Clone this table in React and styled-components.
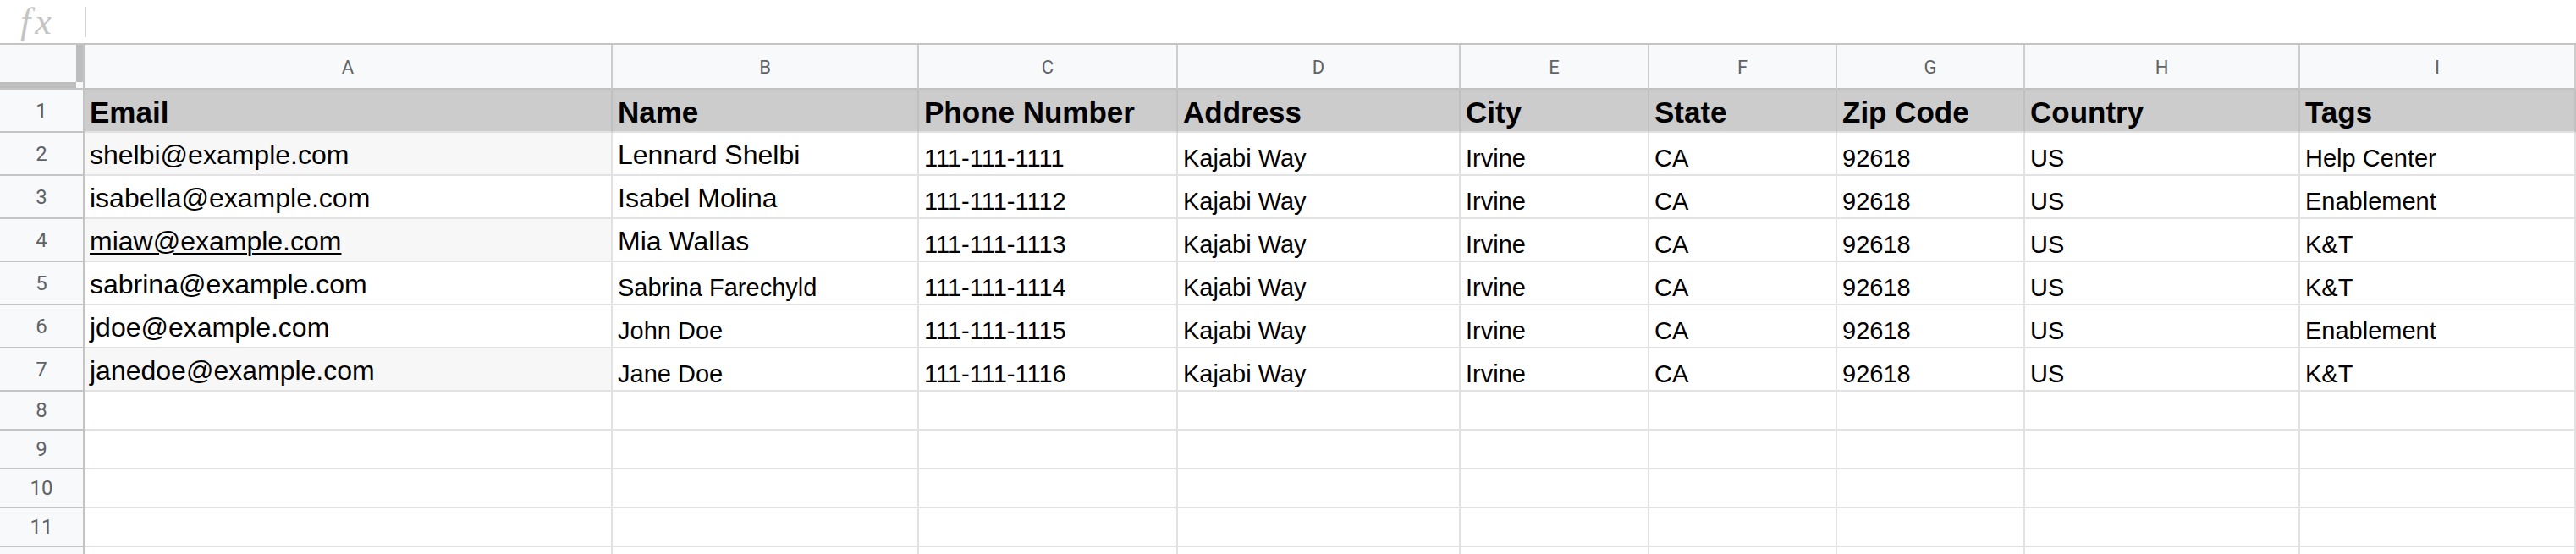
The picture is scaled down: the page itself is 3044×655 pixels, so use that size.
import React from "react";
import styled, { createGlobalStyle } from "styled-components";

const GlobalStyle = createGlobalStyle`
  html, body {
    margin: 0;
    padding: 0;
    background: #ffffff;
    overflow: hidden;
  }
`;

const COLS = [624, 362, 306, 334, 223, 222, 222, 325, 326];
const LETTERS = ["A", "B", "C", "D", "E", "F", "G", "H", "I"];

const HEADERS = ["Email", "Name", "Phone Number", "Address", "City", "State", "Zip Code", "Country", "Tags"];

const PEOPLE = [
  { email: "shelbi@example.com", name: "Lennard Shelbi", bigName: true, phone: "111-111-1111", tag: "Help Center", shade: true },
  { email: "isabella@example.com", name: "Isabel Molina", bigName: true, phone: "111-111-1112", tag: "Enablement" },
  { email: "miaw@example.com", name: "Mia Wallas", bigName: true, phone: "111-111-1113", tag: "K&T", shade: true, link: true },
  { email: "sabrina@example.com", name: "Sabrina Farechyld", phone: "111-111-1114", tag: "K&T" },
  { email: "jdoe@example.com", name: "John Doe", phone: "111-111-1115", tag: "Enablement" },
  { email: "janedoe@example.com", name: "Jane Doe", phone: "111-111-1116", tag: "K&T", shade: true },
];

const Page = styled.div`
  width: 3044px;
  height: 655px;
  overflow: hidden;
  font-family: "Liberation Sans", Arial, sans-serif;
`;

const FormulaBar = styled.div`
  height: 51px;
  border-bottom: 2px solid #c4c4c4;
  display: flex;
  align-items: center;
`;

const FxLabel = styled.span`
  width: 72px;
  padding-left: 24px;
  box-sizing: border-box;
  font-family: "Liberation Serif", "DejaVu Serif", serif;
  font-style: italic;
  font-size: 44px;
  letter-spacing: 5px;
  line-height: 1;
  color: #c4c4c4;
`;

const FxDivider = styled.div`
  width: 2px;
  height: 36px;
  margin-left: 28px;
  background: #d6d6d6;
`;

const Sheet = styled.div`
  display: grid;
  grid-template-columns: 100px ${COLS.map((w) => `${w}px`).join(" ")};
`;

const Corner = styled.div`
  position: relative;
  height: 53px;
  box-sizing: border-box;
  background: #f8f9fa;
  border-right: 2px solid #c4c4c4;
  border-bottom: 2px solid #c4c4c4;

  &::before {
    content: "";
    position: absolute;
    right: 0;
    top: 0;
    width: 8px;
    height: 44px;
    background: #bdbdbd;
  }

  &::after {
    content: "";
    position: absolute;
    left: 0;
    bottom: 0;
    width: 90px;
    height: 7px;
    background: #bdbdbd;
  }
`;

const ColHead = styled.div`
  height: 53px;
  box-sizing: border-box;
  background: #f8f9fa;
  border-right: 2px solid #cdcdcd;
  border-bottom: 2px solid #c0c0c0;
  display: flex;
  align-items: center;
  justify-content: center;
  font-family: Roboto, "Liberation Sans", sans-serif;
  font-size: 22px;
  color: #5f6368;
  padding-top: 2px;
`;

const RowHead = styled.div`
  height: ${(p) => p.$h}px;
  box-sizing: border-box;
  background: #f8f9fa;
  border-right: 2px solid #c4c4c4;
  border-bottom: 2px solid #c4c4c4;
  display: flex;
  align-items: center;
  justify-content: center;
  font-family: Roboto, "Liberation Sans", sans-serif;
  font-size: 24px;
  color: #5f6368;
`;

const SIZES = {
  head: { font: 35, pb: 5, weight: 700 },
  lg: { font: 32, pb: 7, weight: 400 },
  sm: { font: 29, pb: 4, weight: 400 },
};

const Cell = styled.div`
  height: ${(p) => p.$h}px;
  box-sizing: border-box;
  display: flex;
  align-items: flex-end;
  padding: 0 4px ${(p) => (p.$size ? SIZES[p.$size].pb : 0)}px 6px;
  white-space: nowrap;
  overflow: hidden;
  color: #000000;
  font-size: ${(p) => (p.$size ? SIZES[p.$size].font : 29)}px;
  font-weight: ${(p) => (p.$size ? SIZES[p.$size].weight : 400)};
  line-height: 1;
  background: ${(p) => (p.$head ? "#cccccc" : p.$shade ? "#f7f7f7" : "#ffffff")};
  border-right: 2px solid ${(p) => (p.$head ? "#c0c0c0" : "#e2e2e2")};
  border-bottom: 2px solid #e2e2e2;
`;

const LinkText = styled.span`
  text-decoration: underline;
  text-decoration-thickness: 2px;
  text-underline-offset: 3px;
`;

const rowValues = (p) => [
  { text: p.email, size: "lg", shade: p.shade, link: p.link },
  { text: p.name, size: p.bigName ? "lg" : "sm" },
  { text: p.phone, size: "sm" },
  { text: "Kajabi Way", size: "sm" },
  { text: "Irvine", size: "sm" },
  { text: "CA", size: "sm" },
  { text: "92618", size: "sm" },
  { text: "US", size: "sm" },
  { text: p.tag, size: "sm" },
];

const App = () => {
  const emptyRows = [8, 9, 10, 11, null];

  return (
    <Page>
      <GlobalStyle />
      <FormulaBar>
        <FxLabel>fx</FxLabel>
        <FxDivider />
      </FormulaBar>
      <Sheet>
        <Corner />
        {LETTERS.map((l) => (
          <ColHead key={l}>{l}</ColHead>
        ))}

        <RowHead $h={51}>1</RowHead>
        {HEADERS.map((h) => (
          <Cell key={h} $h={51} $size="head" $head>
            {h}
          </Cell>
        ))}

        {PEOPLE.map((p, i) => (
          <React.Fragment key={p.email}>
            <RowHead $h={51}>{i + 2}</RowHead>
            {rowValues(p).map((c, j) => (
              <Cell key={j} $h={51} $size={c.size} $shade={c.shade}>
                {c.link ? <LinkText>{c.text}</LinkText> : c.text}
              </Cell>
            ))}
          </React.Fragment>
        ))}

        {emptyRows.map((n, i) => (
          <React.Fragment key={i}>
            <RowHead $h={46}>{n}</RowHead>
            {COLS.map((w, j) => (
              <Cell key={j} $h={46} />
            ))}
          </React.Fragment>
        ))}
      </Sheet>
    </Page>
  );
};

export default App;
